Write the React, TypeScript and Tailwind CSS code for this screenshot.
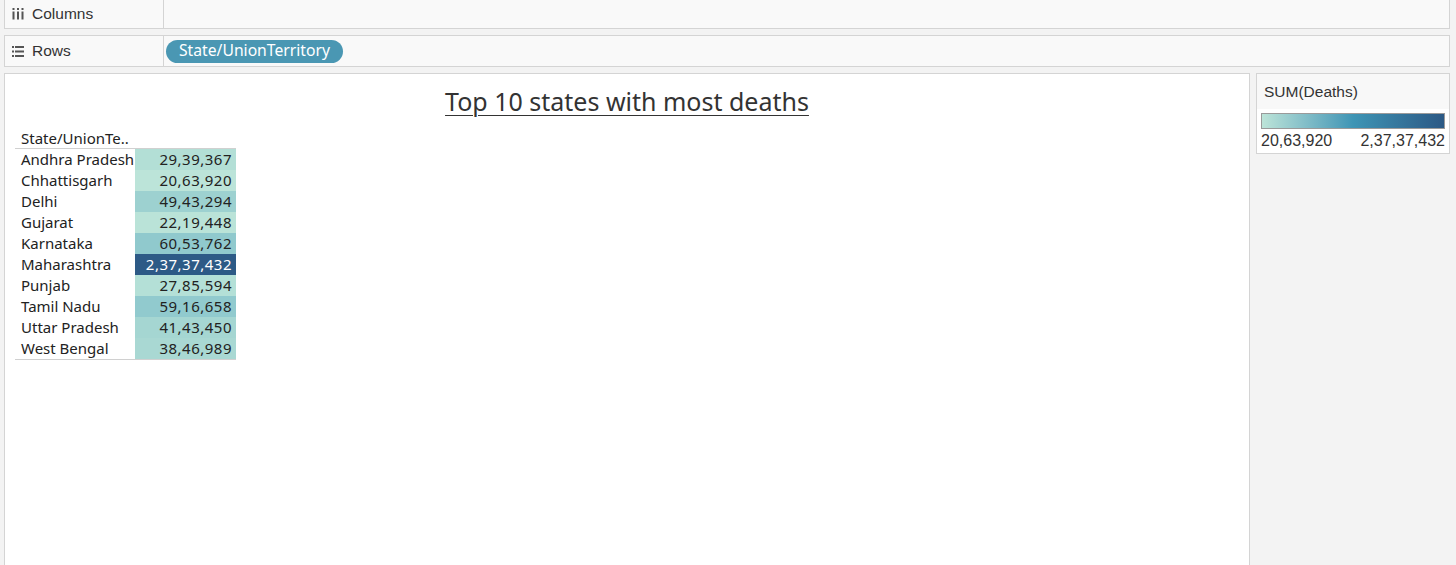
import React from 'react';

type Row = { name: string; value: string; bg: string; dark?: boolean };

const rows: Row[] = [
  { name: 'Andhra Pradesh', value: '29,39,367', bg: 'bg-[#b3dfd6]' },
  { name: 'Chhattisgarh', value: '20,63,920', bg: 'bg-[#bce4d9]' },
  { name: 'Delhi', value: '49,43,294', bg: 'bg-[#9dd1d0]' },
  { name: 'Gujarat', value: '22,19,448', bg: 'bg-[#bae3d8]' },
  { name: 'Karnataka', value: '60,53,762', bg: 'bg-[#90c9cd]' },
  { name: 'Maharashtra', value: '2,37,37,432', bg: 'bg-[#2d5a86]', dark: true },
  { name: 'Punjab', value: '27,85,594', bg: 'bg-[#b4e0d7]' },
  { name: 'Tamil Nadu', value: '59,16,658', bg: 'bg-[#91cace]' },
  { name: 'Uttar Pradesh', value: '41,43,450', bg: 'bg-[#a5d6d2]' },
  { name: 'West Bengal', value: '38,46,989', bg: 'bg-[#a9d8d3]' },
];

function ColumnsIcon() {
  return (
    <svg width="12" height="12" viewBox="0 0 12 12" className="fill-[#555]">
      <rect x="0.5" y="0" width="2" height="2" />
      <rect x="0.5" y="3.5" width="2" height="8" />
      <rect x="5" y="0" width="2" height="2" />
      <rect x="5" y="3.5" width="2" height="8" />
      <rect x="9.5" y="0" width="2" height="2" />
      <rect x="9.5" y="3.5" width="2" height="8" />
    </svg>
  );
}

function RowsIcon() {
  return (
    <svg width="12" height="11" viewBox="0 0 12 11" className="fill-[#555]">
      <rect x="0" y="0" width="2" height="2" />
      <rect x="3" y="0" width="9" height="2" />
      <rect x="0" y="4.5" width="2" height="2" />
      <rect x="3" y="4.5" width="9" height="2" />
      <rect x="0" y="9" width="2" height="2" />
      <rect x="3" y="9" width="9" height="2" />
    </svg>
  );
}

export default function App() {
  return (
    <div className="h-[565px] w-full overflow-hidden bg-[#f3f3f3] pl-[4px] pr-[6px] text-[#333] font-['Liberation_Sans',Arial,sans-serif]">
      {/* Columns shelf */}
      <div className="-mt-px flex h-[30px] border border-[#d4d4d4] bg-[#f9f9f9]">
        <div className="flex w-[159px] items-center border-r border-[#d4d4d4] pl-[7px]">
          <ColumnsIcon />
          <span className="ml-[8px] text-[15.5px]">Columns</span>
        </div>
        <div className="flex-1" />
      </div>

      {/* Rows shelf */}
      <div className="mt-[6px] flex h-[32px] border border-[#d4d4d4] bg-[#f9f9f9]">
        <div className="flex w-[159px] items-center border-r border-[#d4d4d4] pl-[7px]">
          <RowsIcon />
          <span className="ml-[8px] text-[15.5px]">Rows</span>
        </div>
        <div className="flex flex-1 items-center pl-[2px]">
          <span className="flex h-[23px] items-center rounded-full bg-[#4a97b3] px-[13px] text-[15.7px] text-white font-['Noto_Sans',sans-serif]">
            State/UnionTerritory
          </span>
        </div>
      </div>

      {/* Body */}
      <div className="mt-[6px] flex gap-[6px]">
        <div className="h-[520px] w-[1246px] border border-[#d4d4d4] bg-white font-['Noto_Sans',sans-serif]">
          <div className="pt-[11px] text-center">
            <span className="text-[25px] leading-[32px] text-[#333] underline underline-offset-[4px] decoration-1">
              Top 10 states with most deaths
            </span>
          </div>
          <div className="ml-[10px] mt-[11px] w-[221px]">
            <div className="h-[21px] border-b border-[#d0d0d0] pl-[6px] text-[15px] leading-[20px] text-[#222]">
              State/UnionTe..
            </div>
            <div className="border-b border-[#d0d0d0]">
              {rows.map(r => (
                <div key={r.name} className="flex h-[21px] text-[15px] leading-[21px]">
                  <div className="w-[120px] whitespace-nowrap pl-[6px] text-[#222]">{r.name}</div>
                  <div
                    className={`w-[101px] pr-[4px] text-right tracking-[0.5px] ${r.bg} ${r.dark ? 'text-white' : 'text-[#222]'}`}
                  >
                    {r.value}
                  </div>
                </div>
              ))}
            </div>
          </div>
        </div>

        {/* Legend */}
        <div className="h-[81px] flex-1 border border-[#d4d4d4] bg-white">
          <div className="h-[35px] bg-[#f8f8f8] pl-[7px] pt-[8px] text-[15.5px] leading-[20px]">SUM(Deaths)</div>
          <div className="px-[4px] pt-[4px]">
            <div className="h-[16px] border border-[#9a9a9a] bg-gradient-to-r from-[#bce4d8] via-[#3e95b5] to-[#2c5985]" />
            <div className="mt-[2px] flex justify-between text-[16px] leading-[20px]">
              <span>20,63,920</span>
              <span>2,37,37,432</span>
            </div>
          </div>
        </div>
      </div>
    </div>
  );
}
